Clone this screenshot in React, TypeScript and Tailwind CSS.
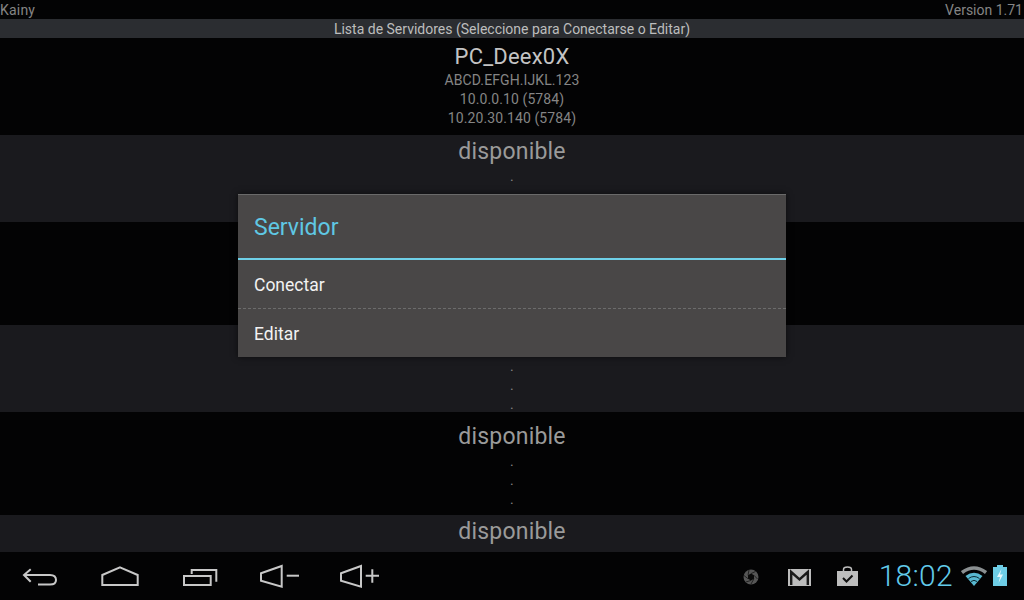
const rows = [
  { h: 'h-[97px]', bg: 'bg-[#030304]', pt: 'pt-[7px]', gap: 'h-[2px]', name: 'PC_Deex0X', lines: ['ABCD.EFGH.IJKL.123', '10.0.0.10 (5784)', '10.20.30.140 (5784)'], nameClass: 'text-[22px] text-[#c4c4c4]' },
  { h: 'h-[87px]', bg: 'bg-[#1a1a1e]', pt: 'pt-[5px]', gap: 'h-[3px]', name: 'disponible', lines: ['.', '.', '.'], nameClass: 'text-[23px] text-[#9a9a9a]' },
  { h: 'h-[103px]', bg: 'bg-[#030304]', pt: 'pt-[13px]', gap: 'h-[3px]', name: 'disponible', lines: ['.', '.', '.'], nameClass: 'text-[23px] text-[#9a9a9a]' },
  { h: 'h-[87px]', bg: 'bg-[#1a1a1e]', pt: 'pt-[5px]', gap: 'h-[3px]', name: 'disponible', lines: ['.', '.', '.'], nameClass: 'text-[23px] text-[#9a9a9a]' },
  { h: 'h-[103px]', bg: 'bg-[#030304]', pt: 'pt-[13px]', gap: 'h-[3px]', name: 'disponible', lines: ['.', '.', '.'], nameClass: 'text-[23px] text-[#9a9a9a]' },
  { h: 'h-[37px]', bg: 'bg-[#1a1a1e]', pt: 'pt-[5px]', gap: 'h-[3px]', name: 'disponible', lines: [], nameClass: 'text-[23px] text-[#9a9a9a]' },
]

function NavIcon({ children }: { children: React.ReactNode }) {
  return (
    <div className="w-20 flex justify-center">
      <svg width="40" height="30" viewBox="0 0 40 30" fill="none" stroke="#c8c8c8" strokeWidth="2">
        {children}
      </svg>
    </div>
  )
}

function Row({ row }: { row: (typeof rows)[number] }) {
  return (
    <div className={`${row.h} ${row.bg} ${row.pt} overflow-hidden flex flex-col items-center shrink-0`}>
      <div className={`h-6 shrink-0 leading-6 tracking-[0.2px] ${row.nameClass}`}>{row.name}</div>
      <div className={`${row.gap} shrink-0`} />
      {row.lines.map((line, i) => (
        <div key={i} className="h-[19px] shrink-0 leading-[19px] text-[14px] tracking-[0.1px] text-[#858585]">
          {line}
        </div>
      ))}
    </div>
  )
}

export default function App() {
  return (
    <main className="relative w-[1024px] h-[600px] overflow-hidden bg-black flex flex-col font-['Roboto',sans-serif]">
      <div className="h-[19px] pt-[2px] bg-[#030304] flex items-center justify-between text-[14px] text-[#858585]">
        <span className="tracking-[0.2px]">Kainy</span>
        <span className="mr-[1px]">Version 1.71</span>
      </div>
      <div className="h-[19px] pt-[1px] bg-[#2b2d31] flex items-center justify-center text-[14px] text-[#bdbdbd]">
        Lista de Servidores (Seleccione para Conectarse o Editar)
      </div>

      {rows.map((row, i) => (
        <Row key={i} row={row} />
      ))}

      <div className="h-12 bg-[#030304] flex items-center shrink-0">
        <NavIcon>
          <path d="M4.5 14H30Q36 14 36 19Q36 23.5 30 23.5H18" />
          <path d="M10.7 8.3L4 14L10.7 20.7" />
        </NavIcon>
        <NavIcon>
          <path d="M20 6.3L37.7 14V24H2.3V14Z" />
        </NavIcon>
        <NavIcon>
          <rect x="4" y="15" width="26.7" height="9" />
          <path d="M11.7 13V9H36.3V20.7" />
        </NavIcon>
        <NavIcon>
          <path d="M1 12.3L21.7 5V25.7L1 19.7Z" />
          <path d="M26.7 14.7H39" />
        </NavIcon>
        <NavIcon>
          <path d="M1 12.3L21 5V25.7L1 19.7Z" />
          <path d="M25.7 14.7H39M32.3 8.3V21.7" />
        </NavIcon>

        <div className="ml-auto flex items-center">
          <svg width="16" height="16" viewBox="0 0 16 16" className="mt-[2px]">
            <circle cx="8" cy="8" r="7.5" fill="#565656" />
            <path d="M8 4.6L11 6.3V9.7L8 11.4L5 9.7V6.3Z" fill="#0a0a0a" />
            <path d="M8 4.6L12.5 2.5M11 6.3L14.5 10M11 9.7L8 15M8 11.4L3 13M5 9.7L1 6.5M5 6.3L6 1" stroke="#151515" strokeWidth="0.8" fill="none" />
          </svg>
          <svg width="23" height="17" viewBox="0 0 23 17" className="ml-[29px] mt-[2px]">
            <rect width="23" height="17" fill="#bdbdbd" />
            <path d="M3.2 16V3L11.5 10.5L19.8 3V16" fill="none" stroke="#1a1a1a" strokeWidth="2.4" />
          </svg>
          <svg width="21" height="20" viewBox="0 0 21 20" className="ml-[26px]">
            <rect y="5" width="21" height="15" fill="#bdbdbd" />
            <path d="M6.5 6V3.5Q6.5 1 10.5 1Q14.5 1 14.5 3.5V6" fill="none" stroke="#bdbdbd" strokeWidth="1.5" />
            <path d="M6 12L9.5 15.5L15.5 9.5" fill="none" stroke="#111" strokeWidth="2" />
          </svg>
          <span className="ml-[21px] text-[30px] font-light tracking-[0.3px] text-[#62cbea] leading-none">18:02</span>
          <svg width="26" height="20" viewBox="0 0 26 20" className="ml-[8px] -mt-[1px]">
            <path d="M1 6.5Q13 -2.5 25 6.5" fill="none" stroke="#8a8f91" strokeWidth="3.5" />
            <path d="M4.5 10Q13 3.5 21.5 10L13 20Z" fill="#58b8d0" />
            <path d="M7.5 12.5Q13 8.5 18.5 12.5M10 15.5Q13 13.2 16 15.5" fill="none" stroke="#0a2a33" strokeWidth="1" />
          </svg>
          <svg width="14" height="21" viewBox="0 0 14 21" className="ml-[6px] mr-[17px] -mt-[1px]">
            <rect x="4" width="6" height="2" fill="#6ecde6" />
            <rect y="2" width="14" height="19" fill="#6ecde6" />
            <path d="M8.5 4L4 12H7L5.5 18L10 9.5H7Z" fill="#e6f7fc" />
          </svg>
        </div>
      </div>

      {/* dialogo */}
      <div className="absolute left-[238px] top-[194px] w-[548px] h-[163px] bg-[#494747] border-t border-[#6a6a6a] shadow-[0_0_6px_rgba(0,0,0,0.6)] flex flex-col">
        <div className="h-[63px] flex items-center pl-4 pt-[4px] text-[23px] text-[#5fc8e4]">Servidor</div>
        <div className="h-[2px] bg-[#6fd0e8]" />
        <div className="h-12 flex items-center pl-4 pt-[2px] text-[17.5px] text-[#f2f2f2]">Conectar</div>
        <div className="h-px border-t border-dashed border-[#6c6c6c]" />
        <div className="h-12 flex items-center pl-4 pt-[2px] text-[17.5px] text-[#f2f2f2]">Editar</div>
      </div>
    </main>
  )
}
